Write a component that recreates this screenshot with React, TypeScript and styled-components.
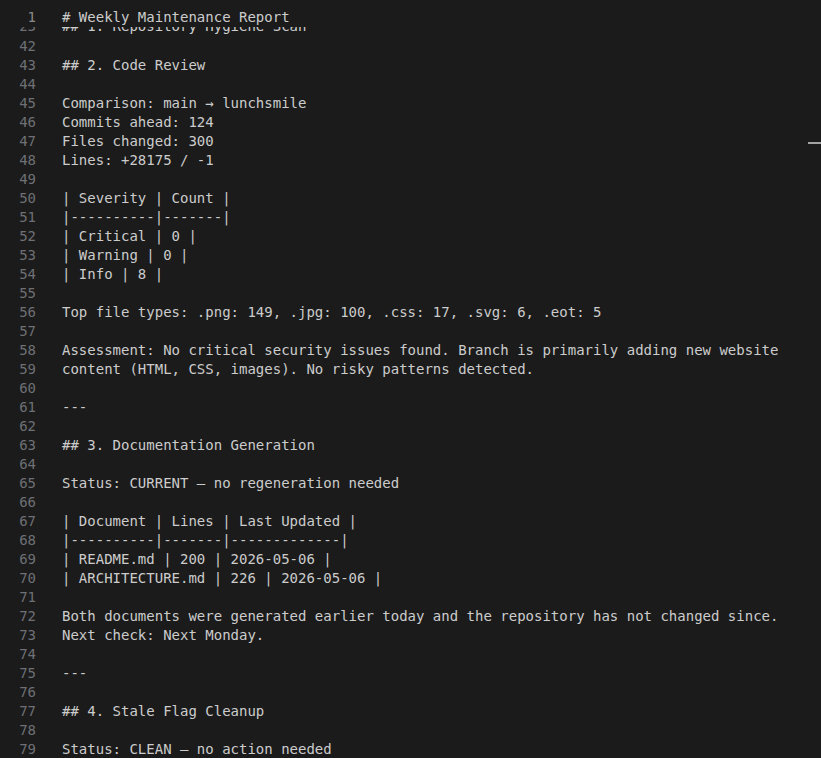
import React from "react";
import styled, { createGlobalStyle } from "styled-components";

const Global = createGlobalStyle`
  html, body { margin: 0; padding: 0; background: #1b1b1b; }
  body { overflow: hidden; }
`;

const Editor = styled.div`
  position: relative;
  width: 821px;
  height: 758px;
  overflow: hidden;
  background: #1b1b1b;
  font-family: "DejaVu Sans Mono", "Liberation Mono", monospace;
  font-size: 14px;
  line-height: 19px;
  color: #cccccc;
`;

const Sticky = styled.div`
  padding-top: 8px;
  background: #1b1b1b;
`;

const Clip = styled.div<{ $h: number; $shift: number }>`
  height: ${(p) => p.$h}px;
  overflow: hidden;
  & > div { margin-top: ${(p) => -p.$shift}px; }
`;

const Row = styled.div`
  display: grid;
  grid-template-columns: 36px 1fr;
  column-gap: 26px;
  height: 19px;
  white-space: pre;
`;

const Num = styled.span<{ $active?: boolean }>`
  text-align: right;
  color: ${(p) => (p.$active ? "#8a8a8a" : "#6e7075")};
`;

const Text = styled.span``;

const RulerMark = styled.div`
  position: absolute;
  right: 0;
  top: 142px;
  width: 13px;
  height: 2px;
  background: #a3a3a3;
`;

const lines: [number, string][] = [
  [42, ""],
  [43, "## 2. Code Review"],
  [44, ""],
  [45, "Comparison: main → lunchsmile"],
  [46, "Commits ahead: 124"],
  [47, "Files changed: 300"],
  [48, "Lines: +28175 / -1"],
  [49, ""],
  [50, "| Severity | Count |"],
  [51, "|----------|-------|"],
  [52, "| Critical | 0 |"],
  [53, "| Warning | 0 |"],
  [54, "| Info | 8 |"],
  [55, ""],
  [56, "Top file types: .png: 149, .jpg: 100, .css: 17, .svg: 6, .eot: 5"],
  [57, ""],
  [58, "Assessment: No critical security issues found. Branch is primarily adding new website"],
  [59, "content (HTML, CSS, images). No risky patterns detected."],
  [60, ""],
  [61, "---"],
  [62, ""],
  [63, "## 3. Documentation Generation"],
  [64, ""],
  [65, "Status: CURRENT — no regeneration needed"],
  [66, ""],
  [67, "| Document | Lines | Last Updated |"],
  [68, "|----------|-------|-------------|"],
  [69, "| README.md | 200 | 2026-05-06 |"],
  [70, "| ARCHITECTURE.md | 226 | 2026-05-06 |"],
  [71, ""],
  [72, "Both documents were generated earlier today and the repository has not changed since."],
  [73, "Next check: Next Monday."],
  [74, ""],
  [75, "---"],
  [76, ""],
  [77, "## 4. Stale Flag Cleanup"],
  [78, ""],
  [79, "Status: CLEAN — no action needed"],
];

export default function App() {
  return (
    <>
      <Global />
      <Editor>
        <Sticky>
          <Row>
            <Num $active>1</Num>
            <Text># Weekly Maintenance Report</Text>
          </Row>
          <Clip $h={10} $shift={10}>
            <Row>
              <Num>23</Num>
              <Text>## 1. Repository Hygiene Scan</Text>
            </Row>
          </Clip>
        </Sticky>
        {lines.map(([n, t]) => (
          <Row key={n}>
            <Num>{n}</Num>
            <Text>{t}</Text>
          </Row>
        ))}
        <RulerMark />
      </Editor>
    </>
  );
}
